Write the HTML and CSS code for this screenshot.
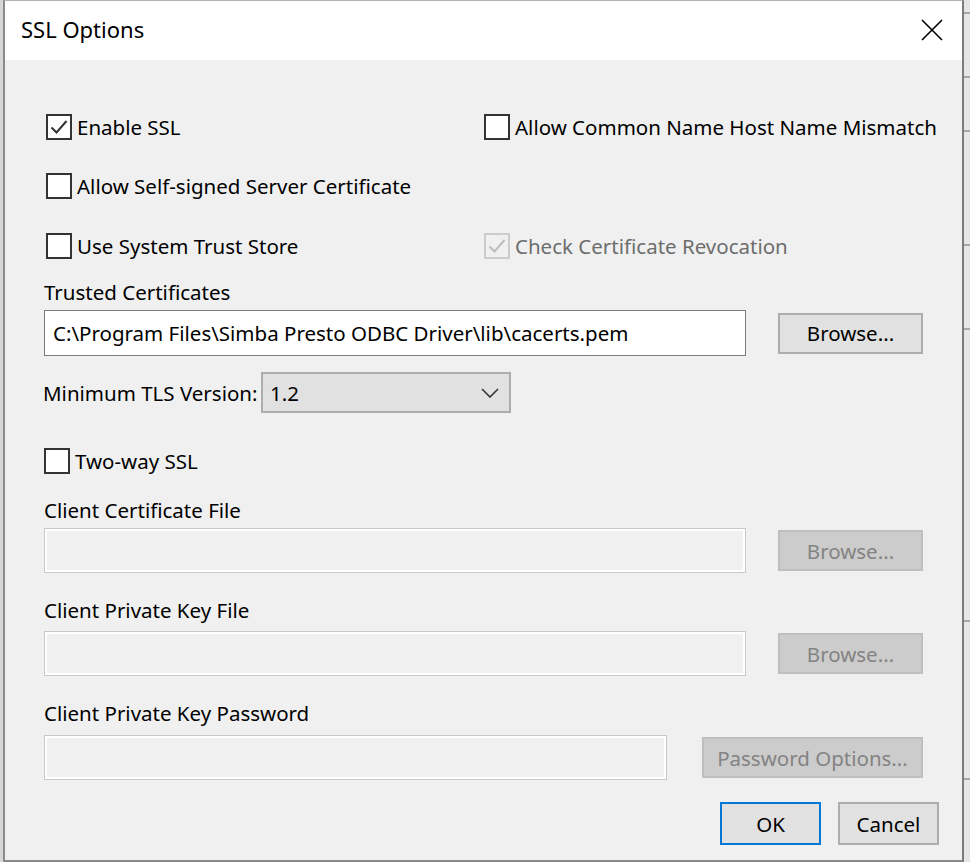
FILE: index.html
```html
<!DOCTYPE html>
<html>
<head>
<meta charset="utf-8">
<title>SSL Options</title>
<link rel="stylesheet" href="styles.css">
</head>
<body>
<div class="desk">
  <div class="edge-left"></div>
  <div class="window">
    <div class="titlebar">
      <span class="title">SSL Options</span>
      <svg class="close" width="22" height="22" viewBox="0 0 22 22"><path d="M1 1L21 21M21 1L1 21" stroke="#000" stroke-width="1.6" fill="none"/></svg>
    </div>
    <div class="content">
      <div class="checkrow r1">
        <div class="check col-left"><span class="box"><svg width="22" height="22" viewBox="0 0 22 22"><path d="M3.5 11.5L8.5 16.5L18.5 5" stroke="#333" stroke-width="2" fill="none"/></svg></span><span>Enable SSL</span></div>
        <div class="check"><span class="box"></span><span>Allow Common Name Host Name Mismatch</span></div>
      </div>
      <div class="checkrow r2">
        <div class="check col-left"><span class="box"></span><span>Allow Self-signed Server Certificate</span></div>
      </div>
      <div class="checkrow r3">
        <div class="check col-left"><span class="box"></span><span>Use System Trust Store</span></div>
        <div class="check disabled"><span class="box"><svg width="22" height="22" viewBox="0 0 22 22"><path d="M3.5 11.5L8.5 16.5L18.5 5" stroke="#bcbcbc" stroke-width="2" fill="none"/></svg></span><span>Check Certificate Revocation</span></div>
      </div>
      <div class="label l-trusted">Trusted Certificates</div>
      <div class="field f-trusted">
        <div class="input">C:\Program Files\Simba Presto ODBC Driver\lib\cacerts.pem</div>
        <div class="btn">Browse...</div>
      </div>
      <div class="tls-row">
        <div class="tls-label">Minimum TLS Version:</div>
        <div class="combo"><span>1.2</span><svg width="18" height="10" viewBox="0 0 18 10"><path d="M1 1L9 9L17 1" stroke="#333" stroke-width="1.6" fill="none"/></svg></div>
      </div>
      <div class="checkrow r-twoway">
        <div class="check"><span class="box"></span><span>Two-way SSL</span></div>
      </div>
      <div class="label l-client">Client Certificate File</div>
      <div class="field f-client">
        <div class="input off"></div>
        <div class="btn off">Browse...</div>
      </div>
      <div class="label l-key">Client Private Key File</div>
      <div class="field f-key">
        <div class="input off"></div>
        <div class="btn off">Browse...</div>
      </div>
      <div class="label l-pass">Client Private Key Password</div>
      <div class="field f-pass">
        <div class="input off pw"></div>
        <div class="btn off wide">Password Options...</div>
      </div>
      <div class="actions">
        <div class="btn action primary">OK</div>
        <div class="btn action">Cancel</div>
      </div>
    </div>
  </div>
  <div class="edge-right">
    <div class="tick t1"></div>
    <div class="tick t2"></div>
    <div class="tick t3"></div>
    <div class="tick t4"></div>
    <div class="tick t5"></div>
    <div class="tick t6"></div>
    <div class="tick t7"></div>
  </div>
</div>
</body>
</html>
```

FILE: styles.css
```css
* { box-sizing: border-box; }
html, body { margin: 0; padding: 0; }
body {
  width: 970px;
  height: 862px;
  overflow: hidden;
  background: #e4e4e4;
  font-family: "Segoe UI", "Noto Sans", "Open Sans", sans-serif;
  font-size: 20.5px;
  color: #000;
  white-space: nowrap;
}
.desk { display: flex; height: 862px; }
.edge-left { width: 3px; background: #d6d6d6; flex: 0 0 3px; }
.window {
  flex: 0 0 961px;
  height: 862px;
  border-left: 2px solid #8a8a8a;
  border-right: 2px solid #7c7c7c;
  border-top: 1px solid #b4b4b4;
  border-bottom: 2px solid #8a8a8a;
  background: #f0f0f0;
  display: flex;
  flex-direction: column;
}
.titlebar {
  height: 59px;
  background: #fff;
  display: flex;
  align-items: center;
  justify-content: space-between;
  padding: 0 19px 3px 16px;
  flex: 0 0 59px;
}
.title { font-size: 22px; }
.close { display: block; margin-top: 1px; }
.content { padding-left: 39px; display: flex; flex-direction: column; }
.checkrow { display: flex; align-items: center; height: 26px; }
.check { display: flex; align-items: center; gap: 5px; }
.col-left { width: 438px; margin-left: 2px; }
.box {
  width: 26px; height: 26px;
  border: 2px solid #333;
  background: #fff;
  display: flex; align-items: center; justify-content: center;
  flex: 0 0 26px;
}
.box svg { display: block; }
.disabled { color: #6d6d6d; }
.disabled .box { border-color: #cccccc; background: #f0f0f0; }
.r1 { margin-top: 54px; }
.r2 { margin-top: 33px; }
.r3 { margin-top: 34px; }
.label { height: 24px; line-height: 24px; }
.l-trusted { margin-top: 21px; }
.field { display: flex; align-items: center; height: 46px; }
.f-trusted { margin-top: 6px; }
.input {
  width: 702px; height: 46px;
  border: 1px solid #7a7a7a;
  background: #fff;
  padding-left: 8px;
  display: flex; align-items: center;
}
.input.off { border-color: #c8c8c8; background: #f0f0f0; box-shadow: inset 0 0 0 2px #fff; height: 45px; }
.input.pw { width: 623px; }
.btn {
  margin-left: 32px;
  width: 145px; height: 41px;
  background: #e1e1e1;
  border: 2px solid #adadad;
  display: flex; align-items: center; justify-content: center;
}
.btn.off { background: #cccccc; border-color: #bfbfbf; color: #838383; }
.btn.wide { width: 221px; margin-left: 35px; }
.tls-row { display: flex; align-items: center; height: 41px; margin-top: 16px; }
.tls-label { width: 218px; margin-left: -1px; }
.combo {
  width: 250px; height: 41px;
  background: #e1e1e1;
  border: 2px solid #adadad;
  display: flex; align-items: center; justify-content: space-between;
  padding: 0 10px 0 7px;
}
.combo svg { display: block; }
.r-twoway { margin-top: 35px; }
.l-client { margin-top: 24px; }
.f-client { margin-top: 6px; height: 45px; }
.l-key { margin-top: 25px; }
.f-key { margin-top: 9px; height: 45px; }
.l-pass { margin-top: 25px; }
.f-pass { margin-top: 10px; height: 45px; }
.actions { display: flex; justify-content: flex-end; gap: 17px; padding-right: 23px; margin-top: 22px; }
.btn.action { margin-left: 0; width: 101px; height: 43px; }
.btn.primary { border-color: #0078d7; }
.edge-right { flex: 1; background: #e6e6e6; display: flex; flex-direction: column; }
.tick { height: 2px; background: #a8a8a8; }
.t1 { margin-top: 12px; }
.t2 { margin-top: 62px; }
.t3 { margin-top: 52px; }
.t4 { margin-top: 112px; }
.t5 { margin-top: 82px; }
.t6 { margin-top: 290px; }
.t7 { margin-top: 156px; }
```
